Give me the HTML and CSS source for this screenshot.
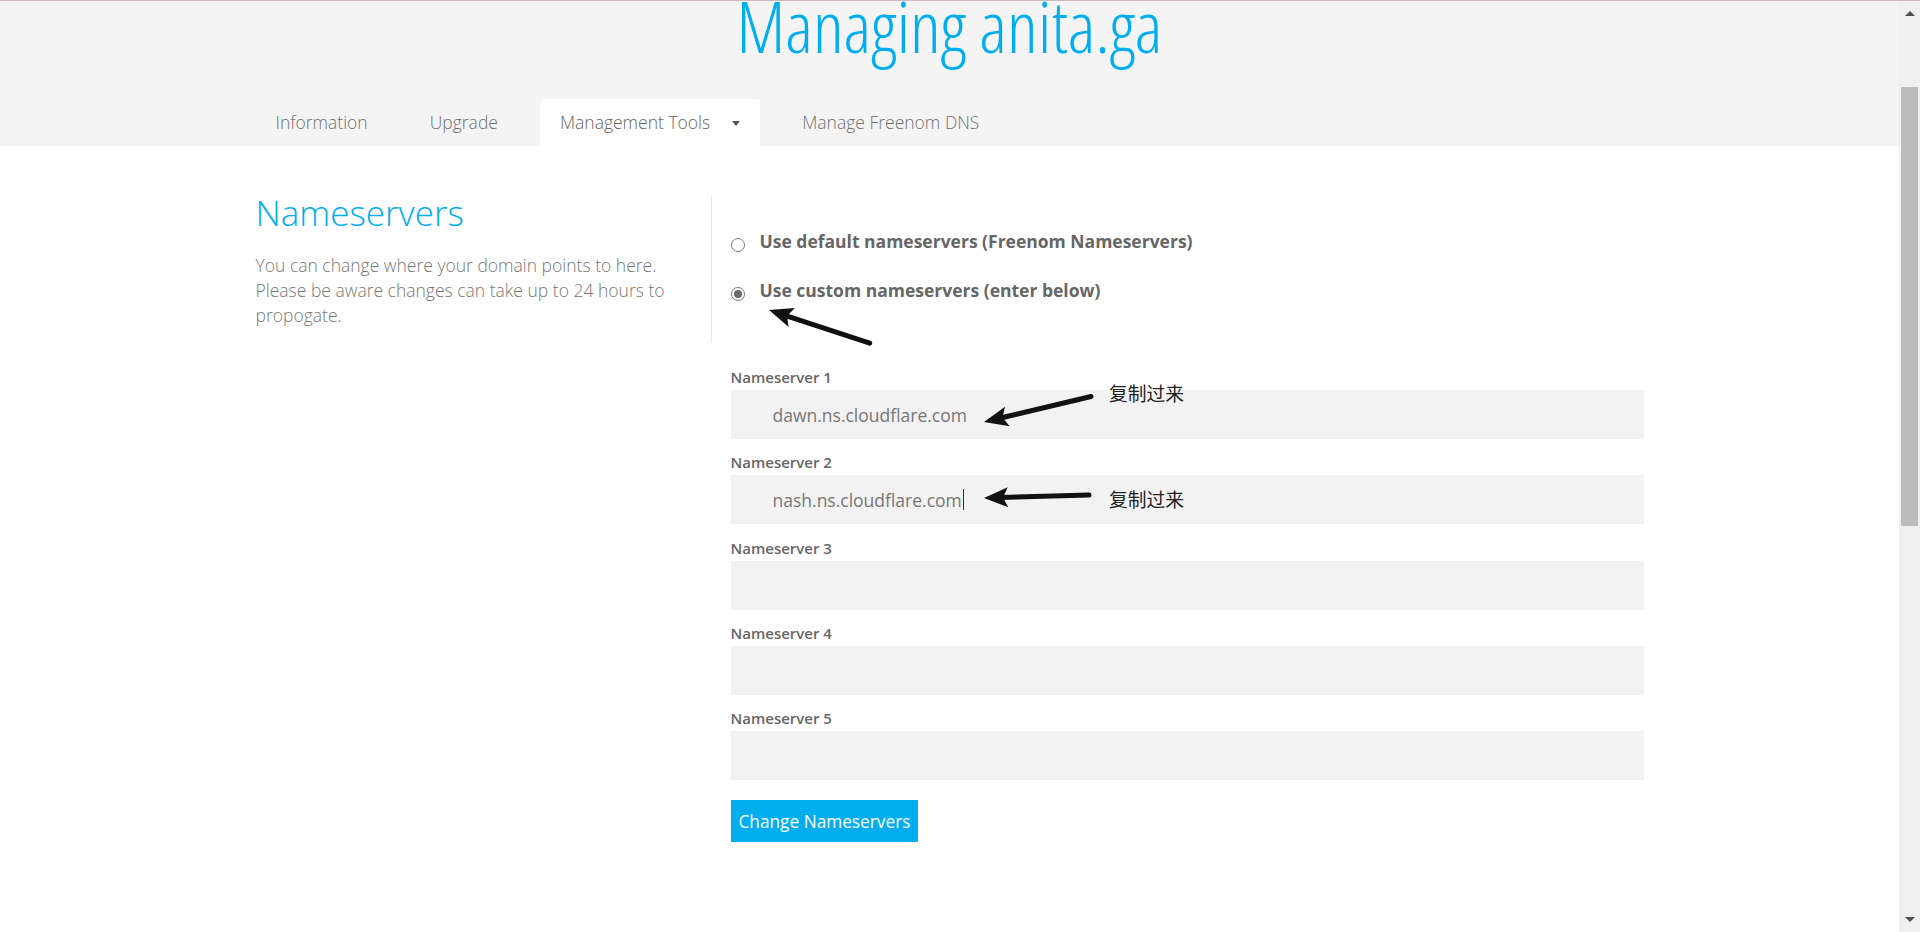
FILE: index.html
```html
<!DOCTYPE html>
<html lang="en">
<head>
<meta charset="utf-8">
<title>Managing anita.ga</title>
<link rel="stylesheet" href="styles.css">
</head>
<body>
<div class="page">
  <header class="hero">
    <h1 class="hero-title">Managing anita.ga</h1>
    <nav class="tabs">
      <a class="tab">Information</a>
      <a class="tab">Upgrade</a>
      <a class="tab tab-active">Management Tools<span class="caret"></span></a>
      <a class="tab">Manage Freenom DNS</a>
    </nav>
  </header>

  <main class="content">
    <aside class="intro">
      <h2 class="intro-title">Nameservers</h2>
      <p class="intro-text">You can change where your domain points to here. Please be aware changes can take up to 24 hours to propogate.</p>
    </aside>

    <form class="ns-form">
      <div class="choices">
        <label class="choice"><span class="radio"></span><span>Use default nameservers (Freenom Nameservers)</span></label>
        <label class="choice"><span class="radio radio-on"></span><span>Use custom nameservers (enter below)</span></label>
      </div>

      <div class="field">
        <span class="field-label">Nameserver 1</span>
        <div class="field-input">dawn.ns.cloudflare.com</div>
      </div>
      <div class="field">
        <span class="field-label">Nameserver 2</span>
        <div class="field-input">nash.ns.cloudflare.com<span class="text-cursor"></span></div>
      </div>
      <div class="field">
        <span class="field-label">Nameserver 3</span>
        <div class="field-input"></div>
      </div>
      <div class="field">
        <span class="field-label">Nameserver 4</span>
        <div class="field-input"></div>
      </div>
      <div class="field">
        <span class="field-label">Nameserver 5</span>
        <div class="field-input"></div>
      </div>

      <button class="submit" type="button">Change Nameservers</button>
    </form>
  </main>
</div>

<svg class="annotations" width="1899" height="932" viewBox="0 0 1899 932" xmlns="http://www.w3.org/2000/svg">
  <g fill="#111" stroke="#111">
    <g transform="translate(769 309) rotate(18.27)">
      <path d="M0 0 L24 -10 L19 0 L24 10 Z" stroke="none"/>
      <line x1="16" y1="0" x2="106" y2="0" stroke-width="5" stroke-linecap="round"/>
    </g>
    <g transform="translate(984 421) rotate(-13.4)">
      <path d="M0 0 L24 -10 L19 0 L24 10 Z" stroke="none"/>
      <line x1="16" y1="0" x2="110" y2="0" stroke-width="5" stroke-linecap="round"/>
    </g>
    <g transform="translate(984 497) rotate(-1.6)">
      <path d="M0 0 L24 -10 L19 0 L24 10 Z" stroke="none"/>
      <line x1="16" y1="0" x2="105" y2="0" stroke-width="5" stroke-linecap="round"/>
    </g>
  </g>
  <text class="note" x="1109" y="399.5">复制过来</text>
  <text class="note" x="1109" y="505.5">复制过来</text>
</svg>

<div class="scrollbar">
  <div class="sb-btn"><span class="sb-up"></span></div>
  <div class="sb-thumb"></div>
  <div class="sb-fill"></div>
  <div class="sb-btn"><span class="sb-down"></span></div>
</div>
</body>
</html>
```

FILE: styles.css
```css
* { box-sizing: border-box; }

html, body {
  margin: 0;
  padding: 0;
}

body {
  position: relative;
  height: 932px;
  overflow: hidden;
  background: #fff;
  border-top: 1px solid #cdb9bd;
  font-family: "Open Sans", "Liberation Sans", sans-serif;
  color: #666;
}

.page {
  width: 1899px;
}

/* header */
.hero {
  background: #f4f4f4;
}

.hero-title {
  margin: 0 0 50px;
  font-size: 72px;
  font-weight: 300;
  font-stretch: 75%;
  line-height: 48px;
  text-align: center;
  color: #00aeef;
}

.tabs {
  width: 1388px;
  margin: 0 auto;
  display: flex;
  gap: 22px;
  height: 47px;
}

.tab {
  display: flex;
  align-items: center;
  padding: 0 20px;
  font-size: 17.5px;
  font-weight: 300;
  line-height: 47px;
  color: #707070;
}

.tab-active {
  background: #fff;
  border-radius: 4px 4px 0 0;
  color: #666;
}

.caret {
  width: 0;
  height: 0;
  margin-left: 22px;
  margin-top: 2px;
  border-left: 4px solid transparent;
  border-right: 4px solid transparent;
  border-top: 5px solid #555;
}

/* content */
.content {
  width: 1388px;
  margin: 0 auto;
  display: flex;
  align-items: flex-start;
  padding-top: 50px;
}

.intro {
  flex: none;
  width: 456px;
  padding-bottom: 15.5px;
  border-right: 1px solid #e8e8e8;
}

.intro-title {
  margin: 0;
  font-size: 35px;
  font-weight: 300;
  line-height: 34px;
  color: #00aeef;
}

.intro-text {
  margin: 22.5px 0 0;
  max-width: 440px;
  font-size: 17.5px;
  font-weight: 300;
  line-height: 25px;
  color: #777;
}

.ns-form {
  flex: 1;
  padding: 33px 0 0 19px;
}

.choices {
  display: flex;
  flex-direction: column;
  gap: 24px;
  margin-bottom: 64px;
}

.choice {
  display: flex;
  align-items: flex-start;
  gap: 15px;
  font-size: 17.5px;
  font-weight: 700;
  line-height: 25px;
  color: #666;
}

.radio {
  flex: none;
  width: 14px;
  height: 14px;
  margin-top: 9px;
  border: 1px solid #7a7a7a;
  border-radius: 50%;
  background: #fff;
  display: flex;
  align-items: center;
  justify-content: center;
}

.radio-on::after {
  content: "";
  width: 8px;
  height: 8px;
  border-radius: 50%;
  background: #6b6b6b;
}

.field {
  margin-bottom: 13.3px;
}

.field-label {
  display: block;
  margin-bottom: 3px;
  font-size: 15px;
  font-weight: 600;
  line-height: 20px;
  color: #666;
}

.field-input {
  display: flex;
  align-items: center;
  height: 49px;
  padding-left: 42px;
  background: #f2f2f2;
  font-size: 17.5px;
  color: #777;
}

.text-cursor {
  width: 1px;
  height: 21px;
  margin-left: 1px;
  background: #333;
}

.submit {
  margin-top: 6.7px;
  height: 42px;
  padding: 0 8px;
  border: 0;
  background: #00aeef;
  color: #fff;
  font-family: "Open Sans", "Liberation Sans", sans-serif;
  font-size: 17.25px;
  font-weight: 400;
}

/* annotations */
.annotations {
  position: absolute;
  top: 0;
  left: 0;
  pointer-events: none;
}

.note {
  font-family: "Noto Sans CJK SC", "Noto Sans", sans-serif;
  font-size: 18.75px;
  fill: #222;
}

/* fake scrollbar */
.scrollbar {
  position: fixed;
  top: 1px;
  right: 0;
  bottom: 0;
  width: 21px;
  background: #f0f0f0;
  display: flex;
  flex-direction: column;
}

.sb-btn {
  flex: none;
  height: 25px;
  display: flex;
  align-items: center;
  justify-content: center;
}

.sb-up {
  width: 0;
  height: 0;
  border-left: 5px solid transparent;
  border-right: 5px solid transparent;
  border-bottom: 5px solid #505050;
}

.sb-down {
  width: 0;
  height: 0;
  border-left: 5px solid transparent;
  border-right: 5px solid transparent;
  border-top: 5px solid #505050;
}

.sb-thumb {
  flex: none;
  height: 439px;
  margin: 61px 2px 0;
  background: #bcbcbc;
}

.sb-fill {
  flex: 1;
}
```
